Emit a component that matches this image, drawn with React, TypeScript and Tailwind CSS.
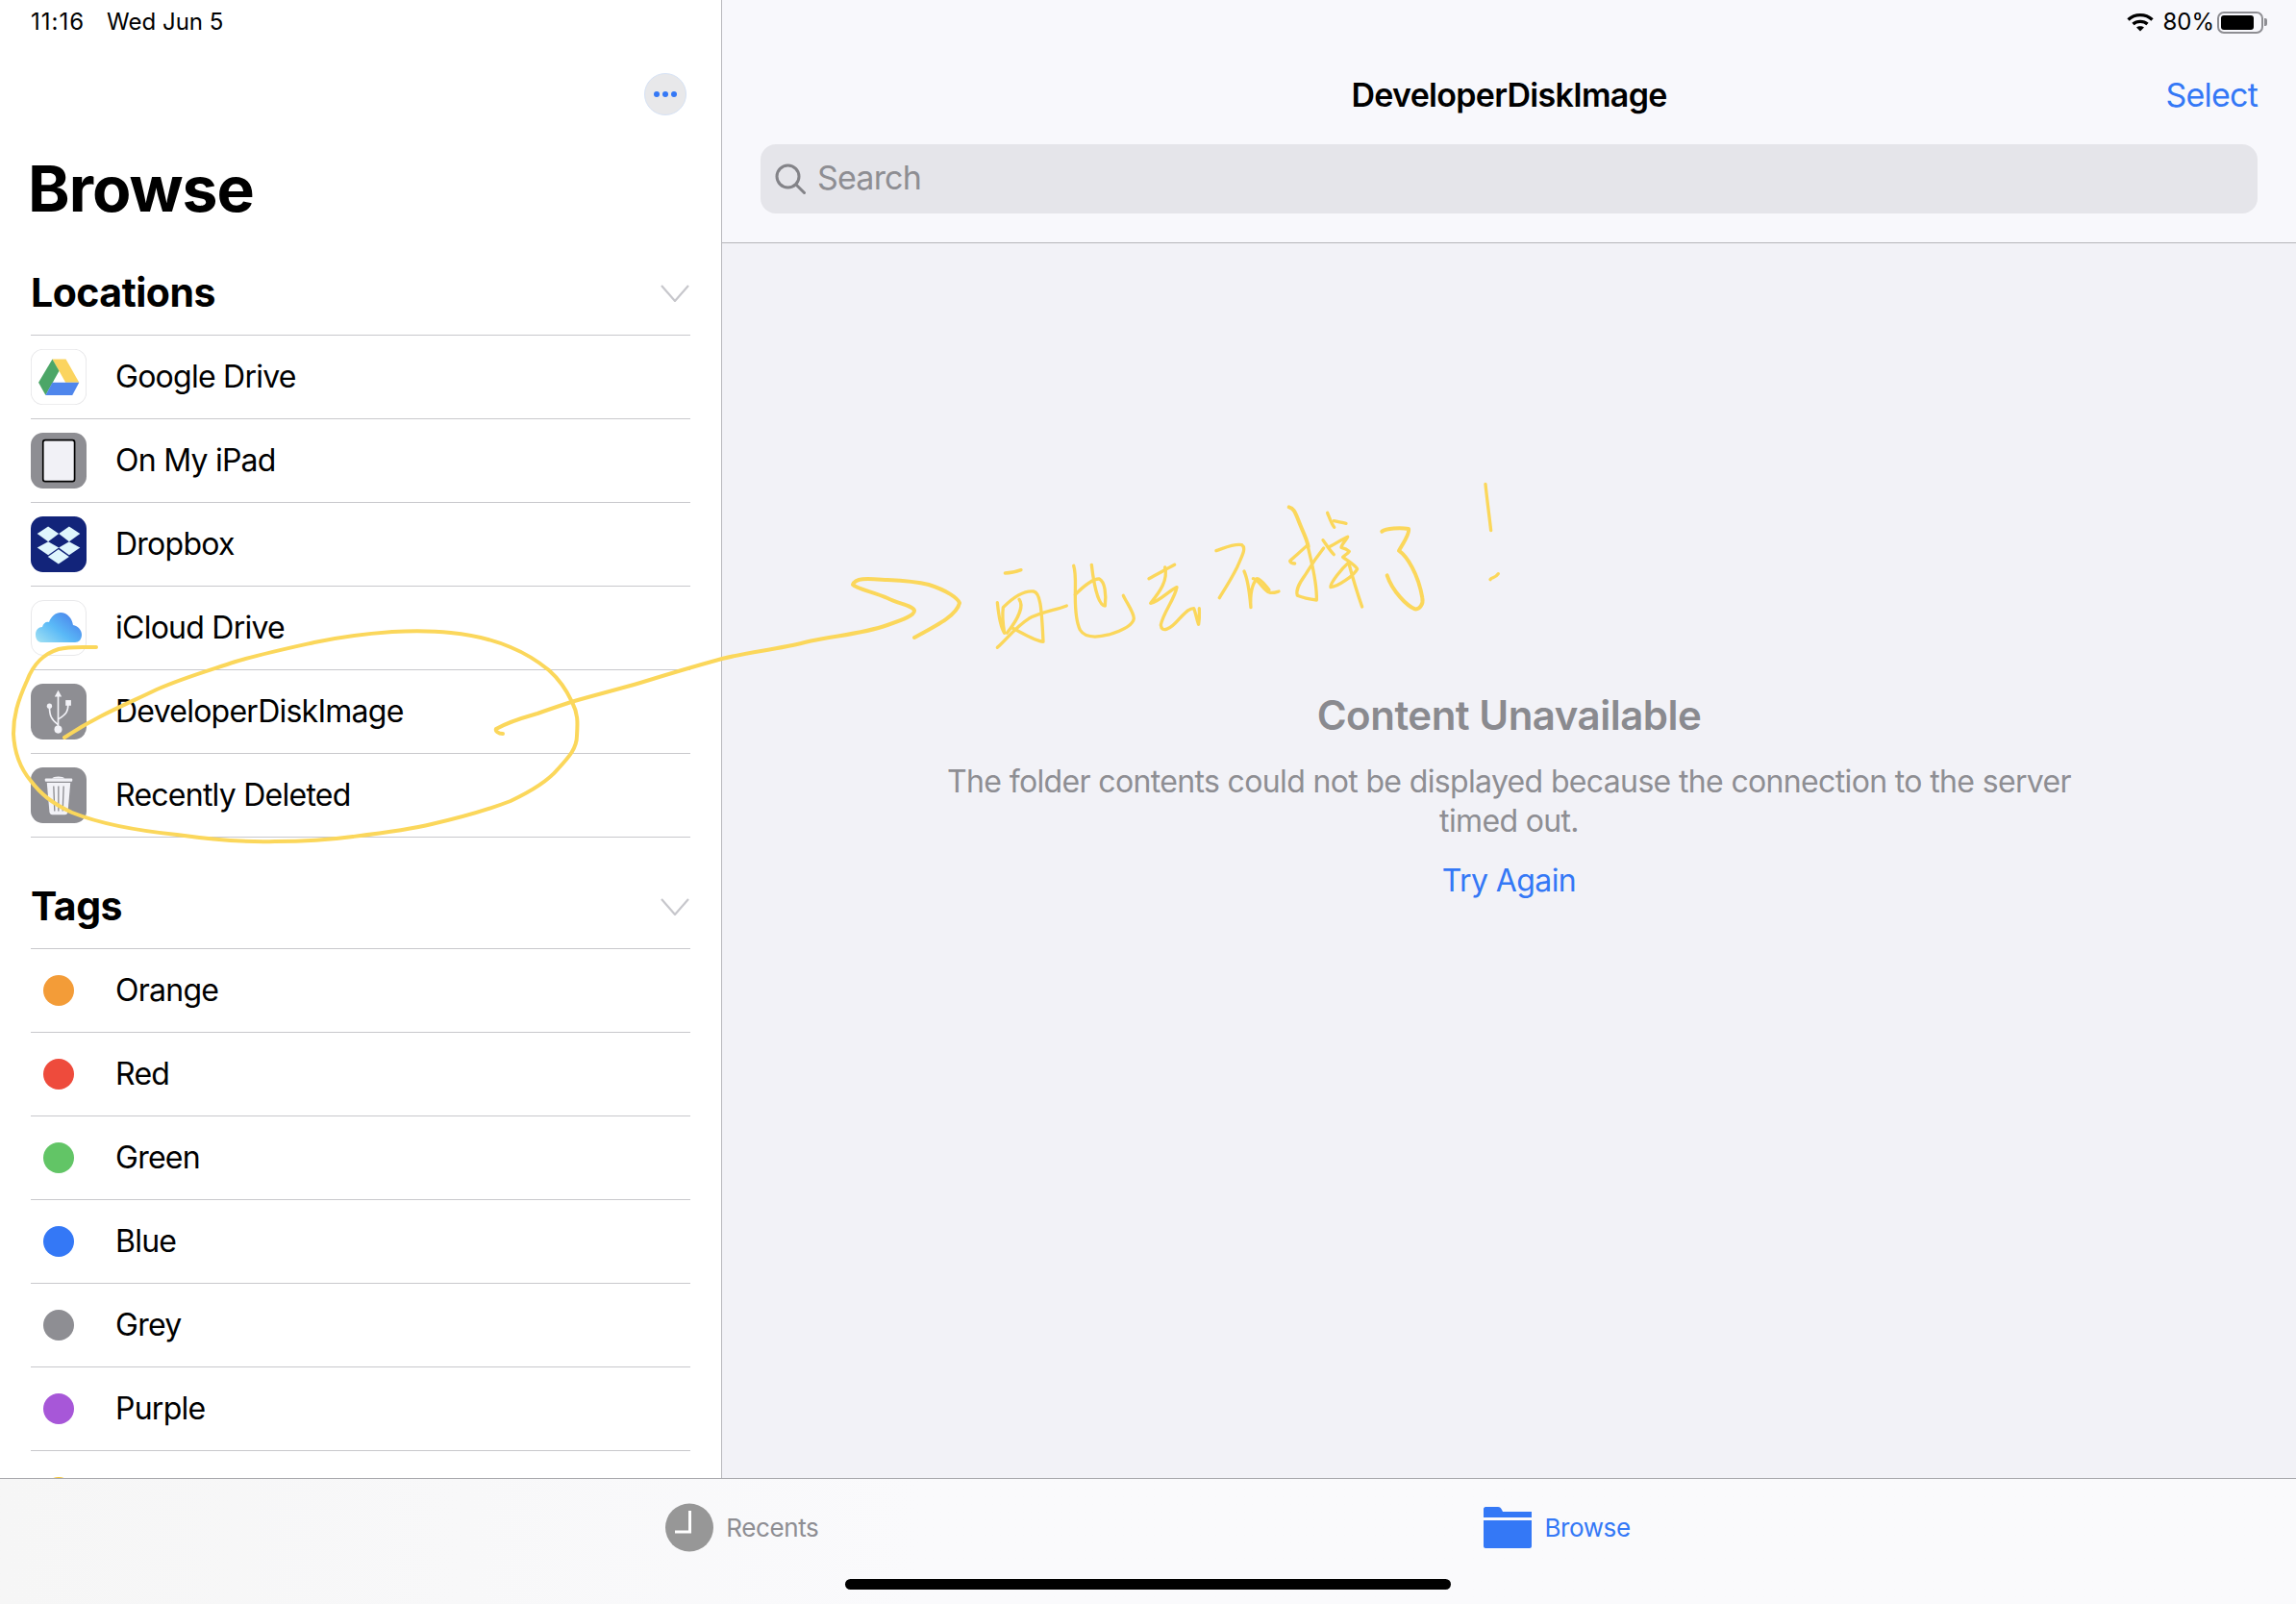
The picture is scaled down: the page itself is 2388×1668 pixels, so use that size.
import React from 'react';

const locations = [
  { name: 'Google Drive', icon: 'drive' },
  { name: 'On My iPad', icon: 'ipad' },
  { name: 'Dropbox', icon: 'dropbox' },
  { name: 'iCloud Drive', icon: 'icloud' },
  { name: 'DeveloperDiskImage', icon: 'usb' },
  { name: 'Recently Deleted', icon: 'trash' },
];

// the last row is only peeking out above the tab bar, so its label can't be seen
const tags = [
  { name: 'Orange', dot: 'bg-[#f39c38]' },
  { name: 'Red', dot: 'bg-[#ee4b3c]' },
  { name: 'Green', dot: 'bg-[#62c566]' },
  { name: 'Blue', dot: 'bg-[#3478f6]' },
  { name: 'Grey', dot: 'bg-[#8e8e93]' },
  { name: 'Purple', dot: 'bg-[#a757d8]' },
  { name: '', dot: 'bg-[#f7c52f]' },
];

const LocationIcon = ({ icon }: { icon: string }) => {
  if (icon === 'drive') {
    return (
      <svg viewBox="96 69 173 173" className="h-[58px] w-[58px]">
        <rect x="97" y="70" width="171" height="171" rx="37" fill="#fff" stroke="#e8e8ea" strokeWidth="3" />
        <path d="M163 100 H205 L246 173 H204 Z" fill="#fbd45f" />
        <path d="M163 100 L184 137 L142 212 L120 173 Z" fill="#4ca667" />
        <path d="M163 173 H246 L225 212 H142 Z" fill="#4f86ec" />
      </svg>
    );
  }
  if (icon === 'ipad') {
    return (
      <svg viewBox="96 330 173 173" className="h-[58px] w-[58px]">
        <rect x="96" y="330" width="173" height="173" rx="38" fill="#8e8e93" />
        <rect x="134" y="353" width="98" height="128" rx="7" fill="#f1f1f6" stroke="#000" strokeWidth="5" />
      </svg>
    );
  }
  if (icon === 'dropbox') {
    return (
      <svg viewBox="96 591 173 173" className="h-[58px] w-[58px]">
        <rect x="96" y="591" width="173" height="173" rx="38" fill="#12247a" />
        <g fill="#dff6fd">
          <path d="M150 622 L183 645 L150 669 L116 645 Z" />
          <path d="M215 622 L249 645 L215 669 L183 645 Z" />
          <path d="M150 669 L183 688 L150 711 L116 688 Z" />
          <path d="M215 669 L249 688 L215 711 L183 688 Z" />
          <path d="M182 693 L215 716 L182 739 L149 716 Z" />
        </g>
      </svg>
    );
  }
  if (icon === 'icloud') {
    return (
      <svg viewBox="0 0 58 58" className="h-[58px] w-[58px]">
        <defs>
          <linearGradient id="cloud" x1="0" y1="1" x2="1" y2="0.2">
            <stop offset="0" stopColor="#a4e3f3" />
            <stop offset="0.5" stopColor="#5ab9f7" />
            <stop offset="1" stopColor="#4a7fea" />
          </linearGradient>
        </defs>
        <rect x="0.5" y="0.5" width="57" height="57" rx="12.5" fill="#fff" stroke="#e8e8ea" />
        <path d="M11 44 C7 44 5 40 5 36 C5 31 8 28 12 28 C13 24 16 22 19 23 C21 17 26 13 31 13 C38 13 43 19 44 26 C49 27 53 31 53 36 C53 41 50 44 46 44 Z" fill="url(#cloud)" />
      </svg>
    );
  }
  if (icon === 'usb') {
    return (
      <svg viewBox="37 33 173 173" className="h-[58px] w-[58px]">
        <rect x="37" y="33" width="173" height="173" rx="38" fill="#8e8e93" />
        <g fill="none" stroke="#f2f2f7" strokeWidth="5">
          <path d="M122 70 V165" />
          <path d="M122 160 C100 145 95 130 95 102" />
          <path d="M122 143 C148 128 153 118 153 95" />
        </g>
        <g fill="#f2f2f7">
          <circle cx="122" cy="175" r="12" />
          <circle cx="95" cy="102" r="8" />
          <rect x="145" y="84" width="17" height="17" />
          <path d="M122 53 L133 73 H111 Z" />
        </g>
      </svg>
    );
  }
  return (
    <svg viewBox="37 294 173 173" className="h-[58px] w-[58px]">
      <rect x="37" y="294" width="173" height="173" rx="38" fill="#8e8e93" />
      <g fill="#f2f2f7">
        <path d="M103 328 C105 320 140 320 142 328 Z" />
        <rect x="81" y="328" width="85" height="10" rx="3" />
        <path d="M87 342 H160 L152 432 C151 438 148 441 143 441 H104 C99 441 96 438 95 432 Z" />
      </g>
      <path d="M108 352 L111 430 M123 352 V430 M139 352 L136 430" stroke="#8e8e93" strokeWidth="4" fill="none" />
    </svg>
  );
};

const Chevron = () => (
  <svg viewBox="0 0 30 18" className="h-[18px] w-[30px]" fill="none" stroke="#c7c7cc" strokeWidth="2.2">
    <path d="M1 1 L15 17 L29 1" />
  </svg>
);

const SectionHeader = ({ title, className }: { title: string; className?: string }) => (
  <div className={`flex h-[88px] items-center justify-between border-b border-[#c8c8cc] pr-[1px] ${className ?? ''}`}>
    <h2 className="text-[41px] font-bold tracking-[-0.5px] text-black">{title}</h2>
    <Chevron />
  </div>
);

const Row = ({ name, children }: { name: string; children: React.ReactNode }) => (
  <div className="flex h-[87px] items-center gap-[30px] border-b border-[#c8c8cc]">
    <div className="flex h-[58px] w-[58px] shrink-0 items-center justify-center">{children}</div>
    {name && <span className="text-[32px] tracking-[-0.75px] text-black">{name}</span>}
  </div>
);

const InkOverlay = () => (
  <svg viewBox="0 0 2388 1668" className="pointer-events-none absolute inset-0 h-full w-full" fill="none" stroke="#fbd75b" strokeLinecap="round" strokeLinejoin="round">
    {/* circle round the two rows */}
    <path
      strokeWidth="4"
      d="M100 673 C85 673 72 672 61 675 C45 680 35 690 28 708 C18 730 14 745 14 763 C15 785 22 800 32 812 C42 825 53 835 75 845 C105 857 145 864 184 868 C220 873 255 876 286 875 C320 875 345 873 367 870 C400 866 425 863 449 857 C480 850 505 843 531 833 C552 823 570 812 580 800 C592 787 600 778 600 765 C601 750 601 742 595 730 C588 715 580 705 571 697 C560 688 548 680 531 673 C512 665 490 660 469 658 C450 656 430 656 408 657 C380 659 355 662 327 668 C300 674 272 680 245 688 C215 698 190 705 163 717 C130 733 100 745 67 767"
    />
    {/* arrow */}
    <path
      strokeWidth="4"
      d="M523 763 C518 763 515 760 516 758 C530 750 545 746 559 742 C570 738 582 734 594 730 C618 723 642 717 666 710 C695 701 722 693 751 685 C780 678 810 675 837 668 C865 661 895 660 923 650 C940 644 951 640 951 635 C950 630 935 628 923 622 C910 616 890 612 887 608 C890 600 905 602 923 603 C945 604 958 606 966 608 C985 614 996 622 998 627 C995 640 975 650 951 663"
    />
    {/* handwriting, first half */}
    <g transform="translate(1020 490) scale(0.3333)" strokeWidth="10">
      <path d="M76 318 Q100 318 126 308" />
      <path d="M52 410 C56 450 64 490 74 505 C68 470 68 440 70 425 C100 395 135 372 165 375 C185 378 190 420 195 532 C170 530 130 505 100 490" />
      <path d="M120 400 C135 420 118 460 82 505" />
      <path d="M52 550 C80 525 110 485 150 460 C190 438 230 435 268 420" />
      <path d="M290 295 C298 320 295 350 295 390 C295 430 298 470 310 495 C325 520 360 520 400 510 C440 498 475 480 478 460 C478 440 455 410 445 388" />
      <path d="M295 385 C320 360 350 335 370 336 C388 345 392 385 388 420 C370 420 355 370 346 292" />
      <path d="M525 335 C550 322 580 305 605 292" />
      <path d="M575 300 C585 340 560 375 530 412 C560 405 590 370 612 362 C605 400 570 440 562 480 C565 505 590 495 620 460 C640 440 650 428 665 428 C670 440 675 465 680 478 C684 455 682 440 682 428" />
      <path d="M735 248 C760 240 790 225 815 230 C830 240 815 265 800 300 C780 340 760 370 745 395" />
      <path d="M822 312 C835 340 840 390 843 425 C840 385 845 355 862 335 C875 335 890 360 900 370" />
    </g>
    {/* handwriting, second half */}
    <g transform="translate(1300 490) scale(0.3333)" strokeWidth="10">
      <path d="M10 335 C25 335 45 375 60 378 C70 382 80 378 90 375" />
      <path strokeWidth="12" d="M122 112 C135 115 140 125 150 150 C165 190 178 210 182 235" />
      <path d="M180 230 C190 280 210 340 208 402 C190 400 165 395 148 388 C140 365 165 335 175 320 C190 295 210 265 230 240" />
      <path d="M180 230 C160 250 140 265 125 280 C128 288 135 288 140 288" />
      <path d="M228 215 C240 232 250 248 262 260" />
      <path d="M242 130 C250 150 255 165 263 175" />
      <path d="M262 155 C275 158 288 160 300 163" />
      <path d="M250 235 C270 225 290 210 305 205 C300 215 285 230 285 238 C295 240 305 245 310 250 C305 258 295 262 290 268 C305 280 325 290 335 305 C325 325 275 360 252 362 C250 350 285 305 308 285 C320 330 335 380 350 423" />
      <path strokeWidth="12" d="M412 188 C425 178 470 175 495 180 C500 195 475 230 465 248 C490 265 525 320 538 395 C542 415 530 432 515 430 C490 420 445 375 428 325" />
      <path d="M735 40 C740 90 747 140 752 185" />
      <path d="M750 338 C755 330 765 335 775 320" />
    </g>
  </svg>
);

export default function App() {
  return (
    <div className="relative flex h-[1668px] w-[2388px] flex-col overflow-hidden bg-white font-[Inter,'Noto_Sans',sans-serif]">
      <div className="flex min-h-0 flex-1">
        {/* sidebar */}
        <aside className="w-[751px] shrink-0 overflow-hidden border-r border-[#b9b9bd] bg-white pl-[32px] pr-[32px]">
          <div className="flex h-[46px] items-center gap-[23px] text-[24px] text-black">
            <span className="tracking-[1px]">11:16</span>
            <span>Wed Jun 5</span>
          </div>
          <div className="mt-[30px] flex justify-end pr-[4px]">
            <button className="flex h-[44px] w-[44px] items-center justify-center gap-[3px] rounded-full border border-[#d6e2f5] bg-[#e8e8ea]">
              <span className="h-[6px] w-[6px] rounded-full bg-[#3478f6]" />
              <span className="h-[6px] w-[6px] rounded-full bg-[#3478f6]" />
              <span className="h-[6px] w-[6px] rounded-full bg-[#3478f6]" />
            </button>
          </div>
          <h1 className="-ml-[3px] mt-[36px] h-[80px] text-[66px] leading-[80px] font-bold tracking-[-1px] text-black">Browse</h1>
          <SectionHeader title="Locations" className="mt-[25px]" />
          {locations.map((l) => (
            <Row key={l.name} name={l.name}>
              <LocationIcon icon={l.icon} />
            </Row>
          ))}
          <SectionHeader title="Tags" className="mt-[28px]" />
          {tags.map((t) => (
            <Row key={t.dot} name={t.name}>
              <span className={`h-[32px] w-[32px] rounded-full ${t.dot}`} />
            </Row>
          ))}
        </aside>

        {/* content */}
        <main className="flex min-w-0 flex-1 flex-col bg-[#f2f2f7]">
          <header className="border-b border-[#b5b5b9] bg-[#f8f8fc] pb-[30px] pl-[40px] pr-[40px]">
            <div className="flex h-[46px] items-center justify-end gap-[9px] text-[24px] text-black">
              <svg viewBox="0 0 28 20" className="h-[20px] w-[28px]" fill="none" stroke="#000" strokeWidth="3.4">
                <path d="M1.5 7.5 C8.5 1 19.5 1 26.5 7.5" />
                <path d="M6.5 12 C10.5 8.5 17.5 8.5 21.5 12" />
                <path d="M14 19.5 L10 15.5 C12 13.8 16 13.8 18 15.5 Z" fill="#000" stroke="none" />
              </svg>
              <span>80%</span>
              <div className="-mr-[10px] -ml-[6px] flex items-center gap-[1px]">
                <div className="flex h-[23px] w-[48px] items-center rounded-[7px] border-2 border-[#8e8e93] p-[2px]">
                  <div className="h-full w-[34px] rounded-[3px] bg-black" />
                </div>
                <div className="h-[8px] w-[3px] rounded-r-[2px] bg-[#8e8e93]" />
              </div>
            </div>
            <div className="relative flex h-[104px] items-center justify-center">
              <h2 className="text-[34px] font-semibold tracking-[-0.7px] text-black">DeveloperDiskImage</h2>
              <span className="absolute right-0 text-[34px] tracking-[-0.8px] text-[#3478f6]">Select</span>
            </div>
            <div className="flex h-[72px] items-center gap-[12px] rounded-[16px] bg-[#e5e5ea] pl-[15px]">
              <svg viewBox="0 0 32 32" className="h-[32px] w-[32px]" fill="none" stroke="#838388" strokeWidth="3">
                <circle cx="13.5" cy="13.5" r="11.5" />
                <path d="M22 22 L30.5 30.5" strokeLinecap="round" />
              </svg>
              <span className="pb-[3px] text-[34px] tracking-[-0.8px] text-[#8e8e93]">Search</span>
            </div>
          </header>
          <div className="flex flex-col items-center pt-[466px]">
            <h3 className="text-[42px] leading-[50px] font-semibold tracking-[-0.5px] text-[#8a8a8f]">Content Unavailable</h3>
            <p className="mt-[23px] w-[1190px] text-center text-[32px] leading-[41px] tracking-[-0.65px] text-[#8e8e93]">
              The folder contents could not be displayed because the connection to the server timed out.
            </p>
            <button className="mt-[22px] text-[32px] leading-[40px] tracking-[-0.6px] text-[#3478f6]">Try Again</button>
          </div>
        </main>
      </div>

      {/* tab bar */}
      <footer className="flex h-[131px] shrink-0 flex-col items-center border-t border-[#a9a9ad] bg-gradient-to-r from-[#f6f6f6] to-[#fafafc] to-40% pt-[25px]">
        <div className="flex h-[51px] items-center gap-[692px]">
          <div className="flex items-center gap-[13px]">
            <svg viewBox="0 0 50 51" className="h-[51px] w-[50px]">
              <circle cx="25" cy="25.5" r="25" fill="#979797" />
              <path d="M25.5 8 V30 H10" fill="none" stroke="#fff" strokeWidth="3" />
            </svg>
            <span className="text-[26px] tracking-[-0.4px] text-[#8e8e93]">Recents</span>
          </div>
          <div className="flex items-center gap-[13px]">
            <svg viewBox="0 0 50 43" className="h-[43px] w-[50px]">
              <path d="M2 0 H15 C17 0 18 1 19 3 L20 5 H50 V11 H0 V2 C0 1 1 0 2 0 Z" fill="#3478f6" />
              <path d="M0 14 H50 V41 C50 42 49 43 48 43 H2 C1 43 0 42 0 41 Z" fill="#3478f6" />
            </svg>
            <span className="text-[26px] tracking-[-0.4px] text-[#3478f6]">Browse</span>
          </div>
        </div>
        <div className="mt-[28px] h-[11px] w-[630px] rounded-full bg-black" />
      </footer>

      <InkOverlay />
    </div>
  );
}
